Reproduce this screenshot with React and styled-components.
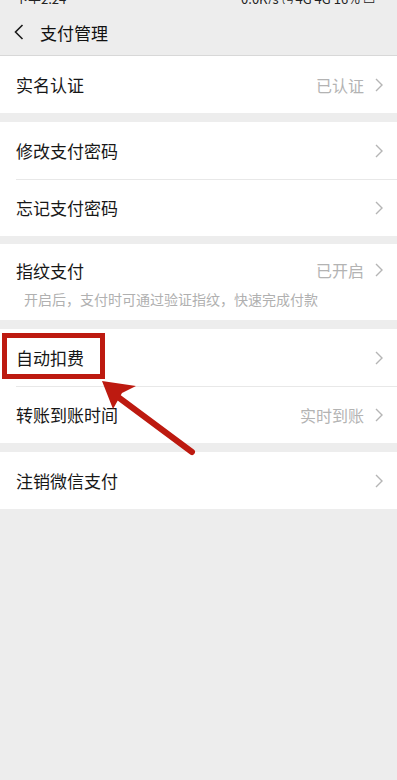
import React from 'react';
import styled, { createGlobalStyle } from 'styled-components';

const GlobalStyle = createGlobalStyle`
  html, body {
    margin: 0;
    padding: 0;
    background: #ededed;
  }
  body {
    font-family: "Noto Sans CJK SC", "Noto Sans", "Liberation Sans", sans-serif;
    -webkit-font-smoothing: antialiased;
  }
`;

const Page = styled.div`
  position: relative;
  width: 397px;
  min-height: 780px;
  background: #ededed;
  overflow: hidden;
`;

// only the bottom edge of the status bar is visible in the shot
const StatusBar = styled.div`
  height: 4px;
  overflow: hidden;
  display: flex;
  align-items: flex-end;
  justify-content: space-between;
  padding: 0 22px 0 15px;
  font-size: 13px;
  line-height: 13px;
  color: #222;
`;

const StatusText = styled.span`
  display: block;
  transform: translateY(1px);
`;

const Header = styled.header`
  height: 52px;
  box-sizing: border-box;
  display: flex;
  align-items: center;
  padding: 5px 0 0 14px;
  border-bottom: 1px solid #d8d8d8;
`;

const BackButton = styled.span`
  display: flex;
  width: 26px;
  align-items: center;
`;

const Title = styled.h1`
  margin: 0;
  font-size: 17px;
  font-weight: 400;
  color: #111;
`;

const Group = styled.section`
  background: #fff;
  margin-top: ${p => p.gap}px;
`;

const Row = styled.div`
  position: relative;
  height: ${p => (p.tall ? 76 : 57)}px;
  box-sizing: border-box;
  display: flex;
  flex-direction: column;
  justify-content: ${p => (p.tall ? 'flex-start' : 'center')};
  padding: ${p => (p.tall ? '16px 14px 0 16px' : '0 14px 0 16px')};

  & + &::before {
    content: '';
    position: absolute;
    top: 0;
    left: 16px;
    right: 0;
    height: 1px;
    background: #e8e8e8;
  }
`;

const Line = styled.div`
  display: flex;
  align-items: center;
  justify-content: space-between;
  height: 20px;
`;

const Label = styled.span`
  font-size: 17px;
  color: #171717;
`;

const Value = styled.span`
  display: flex;
  align-items: center;
  gap: 11px;
  font-size: 16px;
  color: #b3b3b3;
`;

const Hint = styled.div`
  margin-top: 10px;
  padding-left: 8px;
  font-size: 14px;
  line-height: 18px;
  color: #b0b0b0;
`;

const Overlay = styled.svg`
  position: absolute;
  left: 0;
  top: 0;
  pointer-events: none;
`;

const Chevron = () => (
  <svg width="8" height="14" viewBox="0 0 8 14">
    <path d="M1 1l6 6-6 6" fill="none" stroke="#b5b5b5" strokeWidth="1.4" />
  </svg>
);

const BackIcon = () => (
  <svg width="10" height="16" viewBox="0 0 10 16">
    <path d="M8.5 1L1.5 8l7 7" fill="none" stroke="#1a1a1a" strokeWidth="1.6" />
  </svg>
);

const Item = ({ label, value, hint }) => (
  <Row tall={!!hint}>
    <Line>
      <Label>{label}</Label>
      <Value>
        {value}
        <Chevron />
      </Value>
    </Line>
    {hint && <Hint>{hint}</Hint>}
  </Row>
);

const groups = [
  { gap: 0, items: [{ label: '实名认证', value: '已认证' }] },
  {
    gap: 9,
    items: [{ label: '修改支付密码' }, { label: '忘记支付密码' }]
  },
  {
    gap: 8,
    items: [
      {
        label: '指纹支付',
        value: '已开启',
        hint: '开启后，支付时可通过验证指纹，快速完成付款'
      }
    ]
  },
  {
    gap: 9,
    items: [{ label: '自动扣费' }, { label: '转账到账时间', value: '实时到账' }]
  },
  { gap: 9, items: [{ label: '注销微信支付' }] }
];

export default function App() {
  return (
    <Page>
      <GlobalStyle />
      <StatusBar>
        <StatusText>下午2:24</StatusText>
        <StatusText>0.0K/s ◷ 4G 4G 16% ▭</StatusText>
      </StatusBar>
      <Header>
        <BackButton>
          <BackIcon />
        </BackButton>
        <Title>支付管理</Title>
      </Header>
      {groups.map((g, i) => (
        <Group key={i} gap={g.gap}>
          {g.items.map(it => (
            <Item key={it.label} {...it} />
          ))}
        </Group>
      ))}
      <Overlay width="397" height="780" viewBox="0 0 397 780">
        <rect
          x="4.5"
          y="335.5"
          width="98"
          height="41"
          fill="none"
          stroke="#bd1a10"
          strokeWidth="5"
        />
        <line
          x1="118"
          y1="397"
          x2="192"
          y2="452"
          stroke="#bd1a10"
          strokeWidth="6"
          strokeLinecap="round"
        />
        <path d="M102 381 L136 386 L122 393 L113 409 Z" fill="#bd1a10" />
      </Overlay>
    </Page>
  );
}
